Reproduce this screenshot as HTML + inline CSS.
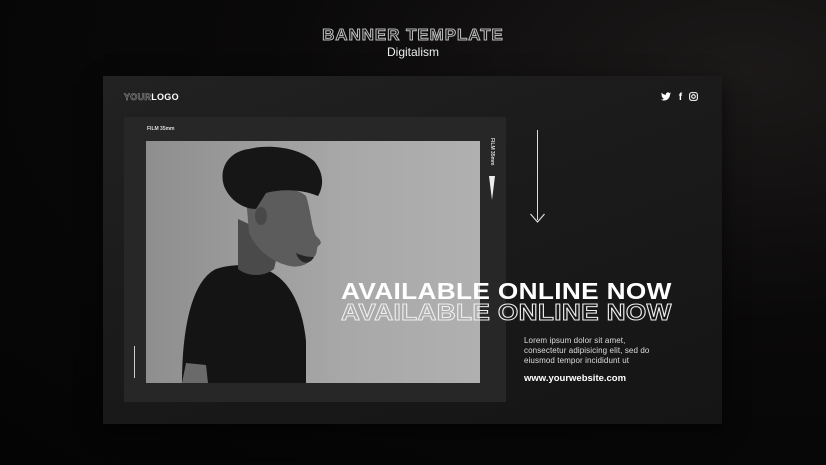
<!DOCTYPE html>
<html><head><meta charset="utf-8"><style>
*{margin:0;padding:0;box-sizing:border-box}
body{width:826px;height:465px;overflow:hidden;background:radial-gradient(ellipse at 90% 15%,#1c1919 0%,#0a0909 45%,#040404 100%);font-family:"Liberation Sans",sans-serif;position:relative}
.a{position:absolute}
.title{left:0;width:826px;top:27px;text-align:center;font-size:16px;font-weight:bold;color:transparent;-webkit-text-stroke:1px #bbb;letter-spacing:1px;transform:scaleX(1.05)}
.sub{left:0;width:826px;top:45px;text-align:center;font-size:12px;color:#eee}
.banner{left:103px;top:76px;width:619px;height:348px;background:linear-gradient(160deg,#222 0%,#1b1b1b 40%,#151515 100%);box-shadow:0 8px 20px rgba(0,0,0,.6)}
.frame{left:124px;top:117px;width:382px;height:285px;background:#272727}
.photo{left:146px;top:141px;width:334px;height:242px;background:linear-gradient(90deg,#8e8e8e,#a8a8a8 60%,#b0b0b0);overflow:hidden}
.h{font-weight:900;font-size:23px;letter-spacing:.3px;transform-origin:left top;transform:scaleX(1.14);white-space:nowrap}
</style></head><body>
<div class="a title">BANNER TEMPLATE</div>
<div class="a sub">Digitalism</div>
<div class="a banner"></div>
<div class="a" style="left:124px;top:92px;font-size:9px;font-weight:bold;color:#fff;letter-spacing:.3px"><span style="color:transparent;-webkit-text-stroke:.6px #888">YOUR</span>LOGO</div>
<div class="a" style="left:661px;top:92px;color:#fff;font-size:10px;font-weight:bold">
<svg width="10" height="9" viewBox="0 0 24 20" style="vertical-align:-1px"><path fill="#fff" d="M24 2.4c-.9.4-1.8.7-2.8.8 1-.6 1.8-1.6 2.2-2.7-1 .6-2 1-3.1 1.2C19.3.7 18 0 16.6 0c-2.7 0-4.9 2.2-4.9 4.9 0 .4 0 .8.1 1.1C7.7 5.8 4.1 3.9 1.7.9c-.4.7-.7 1.6-.7 2.500 0 1.7.9 3.2 2.2 4.1-.8 0-1.6-.2-2.2-.6v.1c0 2.4 1.7 4.4 3.9 4.8-.4.1-.8.2-1.300.2-.3 0-.6 0-.9-.1.6 2 2.4 3.4 4.6 3.4-1.7 1.3-3.8 2.1-6.1 2.1H0c2.2 1.4 4.8 2.2 7.5 2.2 9.1 0 14-7.5 14-14v-.6c1-.7 1.8-1.6 2.5-2.6z"/></svg>
<span style="margin-left:5px">f</span>
<svg width="9" height="9" viewBox="0 0 10 10" style="margin-left:4px;vertical-align:-1px"><rect x=".7" y=".7" width="8.6" height="8.6" rx="2.3" fill="none" stroke="#fff" stroke-width="1.2"/><circle cx="5" cy="5" r="2" fill="none" stroke="#fff" stroke-width="1.2"/></svg></div>
<div class="a frame"></div>
<div class="a" style="left:147px;top:126px;font-size:5px;font-weight:bold;color:#ddd">FILM 35mm</div>
<div class="a" style="left:489px;top:138px;font-size:5px;font-weight:bold;color:#ddd;writing-mode:vertical-rl">FILM 35mm</div>
<svg class="a" style="left:488px;top:176px" width="8" height="24"><path d="M1 0 L7 0 L4 24 Z" fill="#eee"/></svg>
<div class="a" style="left:134px;top:346px;width:1px;height:32px;background:#ccc"></div>
<div class="a photo">
<svg width="334" height="242" viewBox="0 0 334 242">
<path d="M36 242 C36 190 45 140 70 128 C88 122 105 124 118 128 C140 135 156 160 160 200 L160 242 Z" fill="#141414"/>
<path d="M92 78 L92 128 C102 136 118 136 128 128 L135 98 Z" fill="#4a4a4a"/>
<path d="M100 55 C120 45 150 45 160 55 C165 70 165 85 170 95 C176 100 176 103 172 105 C170 108 172 112 168 116 C162 124 152 128 140 124 C125 120 110 108 103 92 Z" fill="#5c5c5c"/>
<ellipse cx="115" cy="75" rx="6" ry="9" fill="#484848"/>
<path d="M78 45 C72 25 85 10 103 8 C122 3 152 6 168 20 C178 32 178 45 172 55 C155 48 135 48 120 52 L110 68 C98 68 84 60 78 45 Z" fill="#161616"/>
<path d="M150 112 C154 124 164 124 168 116 C162 116 156 115 150 112 Z" fill="#252525"/>
<path d="M36 242 L40 222 L60 224 L62 242 Z" fill="#6a6a6a"/>
</svg></div>
<div class="a" style="left:537px;top:130px;width:1px;height:90px;background:#ddd"></div>
<svg class="a" style="left:529px;top:208px" width="17" height="16"><path d="M1.5 6 L8.5 14 L15.5 6" fill="none" stroke="#ddd" stroke-width="1.2"/></svg>
<div class="a h" style="left:341px;top:278px;color:#fff">AVAILABLE ONLINE NOW</div>
<div class="a h" style="left:341px;top:299px;color:transparent;-webkit-text-stroke:1px #eee">AVAILABLE ONLINE NOW</div>
<div class="a" style="left:524px;top:336px;font-size:8px;line-height:10px;color:#ddd;letter-spacing:.1px">Lorem ipsum dolor sit amet,<br>consectetur adipisicing elit, sed do<br>eiusmod tempor incididunt ut</div>
<div class="a" style="left:524px;top:373px;font-size:9.5px;font-weight:bold;color:#fff">www.yourwebsite.com</div>
</body></html>
